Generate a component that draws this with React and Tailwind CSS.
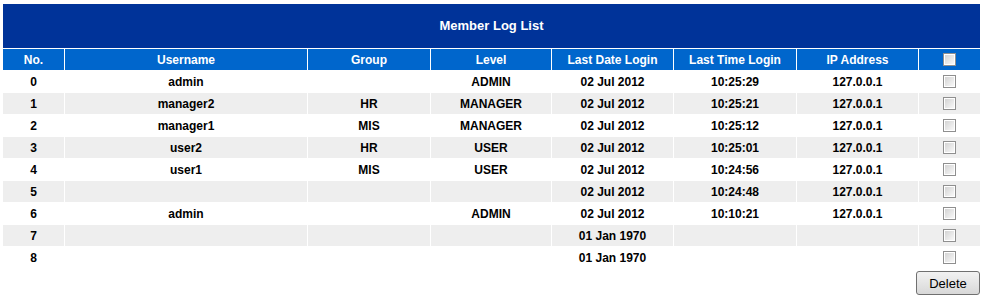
import React from "react";

const logs = [
  { no: 0, user: "admin", group: "", level: "ADMIN", date: "02 Jul 2012", time: "10:25:29", ip: "127.0.0.1" },
  { no: 1, user: "manager2", group: "HR", level: "MANAGER", date: "02 Jul 2012", time: "10:25:21", ip: "127.0.0.1" },
  { no: 2, user: "manager1", group: "MIS", level: "MANAGER", date: "02 Jul 2012", time: "10:25:12", ip: "127.0.0.1" },
  { no: 3, user: "user2", group: "HR", level: "USER", date: "02 Jul 2012", time: "10:25:01", ip: "127.0.0.1" },
  { no: 4, user: "user1", group: "MIS", level: "USER", date: "02 Jul 2012", time: "10:24:56", ip: "127.0.0.1" },
  { no: 5, user: "", group: "", level: "", date: "02 Jul 2012", time: "10:24:48", ip: "127.0.0.1" },
  { no: 6, user: "admin", group: "", level: "ADMIN", date: "02 Jul 2012", time: "10:10:21", ip: "127.0.0.1" },
  { no: 7, user: "", group: "", level: "", date: "01 Jan 1970", time: "", ip: "" },
  { no: 8, user: "", group: "", level: "", date: "01 Jan 1970", time: "", ip: "" },
];

const cols = "grid grid-cols-[61px_242px_122px_120px_121px_122px_121px_61px] gap-x-px h-[21px]";

const Checkbox = () => (
  <span className="block w-[13px] h-[13px] border border-[#8f8f8f] bg-white p-px">
    <span className="block w-full h-full bg-gradient-to-br from-[#d4d4d4] to-[#f8f8f8]" />
  </span>
);

const Cell = ({ children, className = "" }) => (
  <div className={`flex items-center justify-center ${className}`}>{children}</div>
);

const App = () => {
  return (
    <div className="min-h-screen bg-white pt-[4px] pl-[3px] font-['Liberation_Sans',Arial,sans-serif]">
      <div className="w-[977px] flex flex-col gap-y-px">
        <div className="h-[44px] bg-[#003399] flex items-center justify-center text-white font-bold text-[13px]">
          Member Log List
        </div>

        <div className={`${cols} text-white font-bold text-[12px]`}>
          {["No.", "Username", "Group", "Level", "Last Date Login", "Last Time Login", "IP Address"].map((h) => (
            <Cell key={h} className="bg-[#0066cc]">{h}</Cell>
          ))}
          <Cell className="bg-[#0066cc]">
            <Checkbox />
          </Cell>
        </div>

        {logs.map((log, i) => {
          const bg = i % 2 === 0 ? "bg-white" : "bg-[#eeeeee]";
          return (
            <div key={log.no} className={`${cols} text-black font-bold text-[12px]`}>
              <Cell className={bg}>{log.no}</Cell>
              <Cell className={bg}>{log.user}</Cell>
              <Cell className={bg}>{log.group}</Cell>
              <Cell className={bg}>{log.level}</Cell>
              <Cell className={bg}>{log.date}</Cell>
              <Cell className={bg}>{log.time}</Cell>
              <Cell className={bg}>{log.ip}</Cell>
              <Cell className={bg}>
                <Checkbox />
              </Cell>
            </div>
          );
        })}
      </div>

      <div className="w-[977px] flex justify-end mt-[3px]">
        <button className="w-[64px] h-[24px] rounded-[3px] border border-[#707070] bg-gradient-to-b from-[#f2f2f2] to-[#d8d8d8] text-[13px] text-black leading-none">
          Delete
        </button>
      </div>
    </div>
  );
};

export default App;
